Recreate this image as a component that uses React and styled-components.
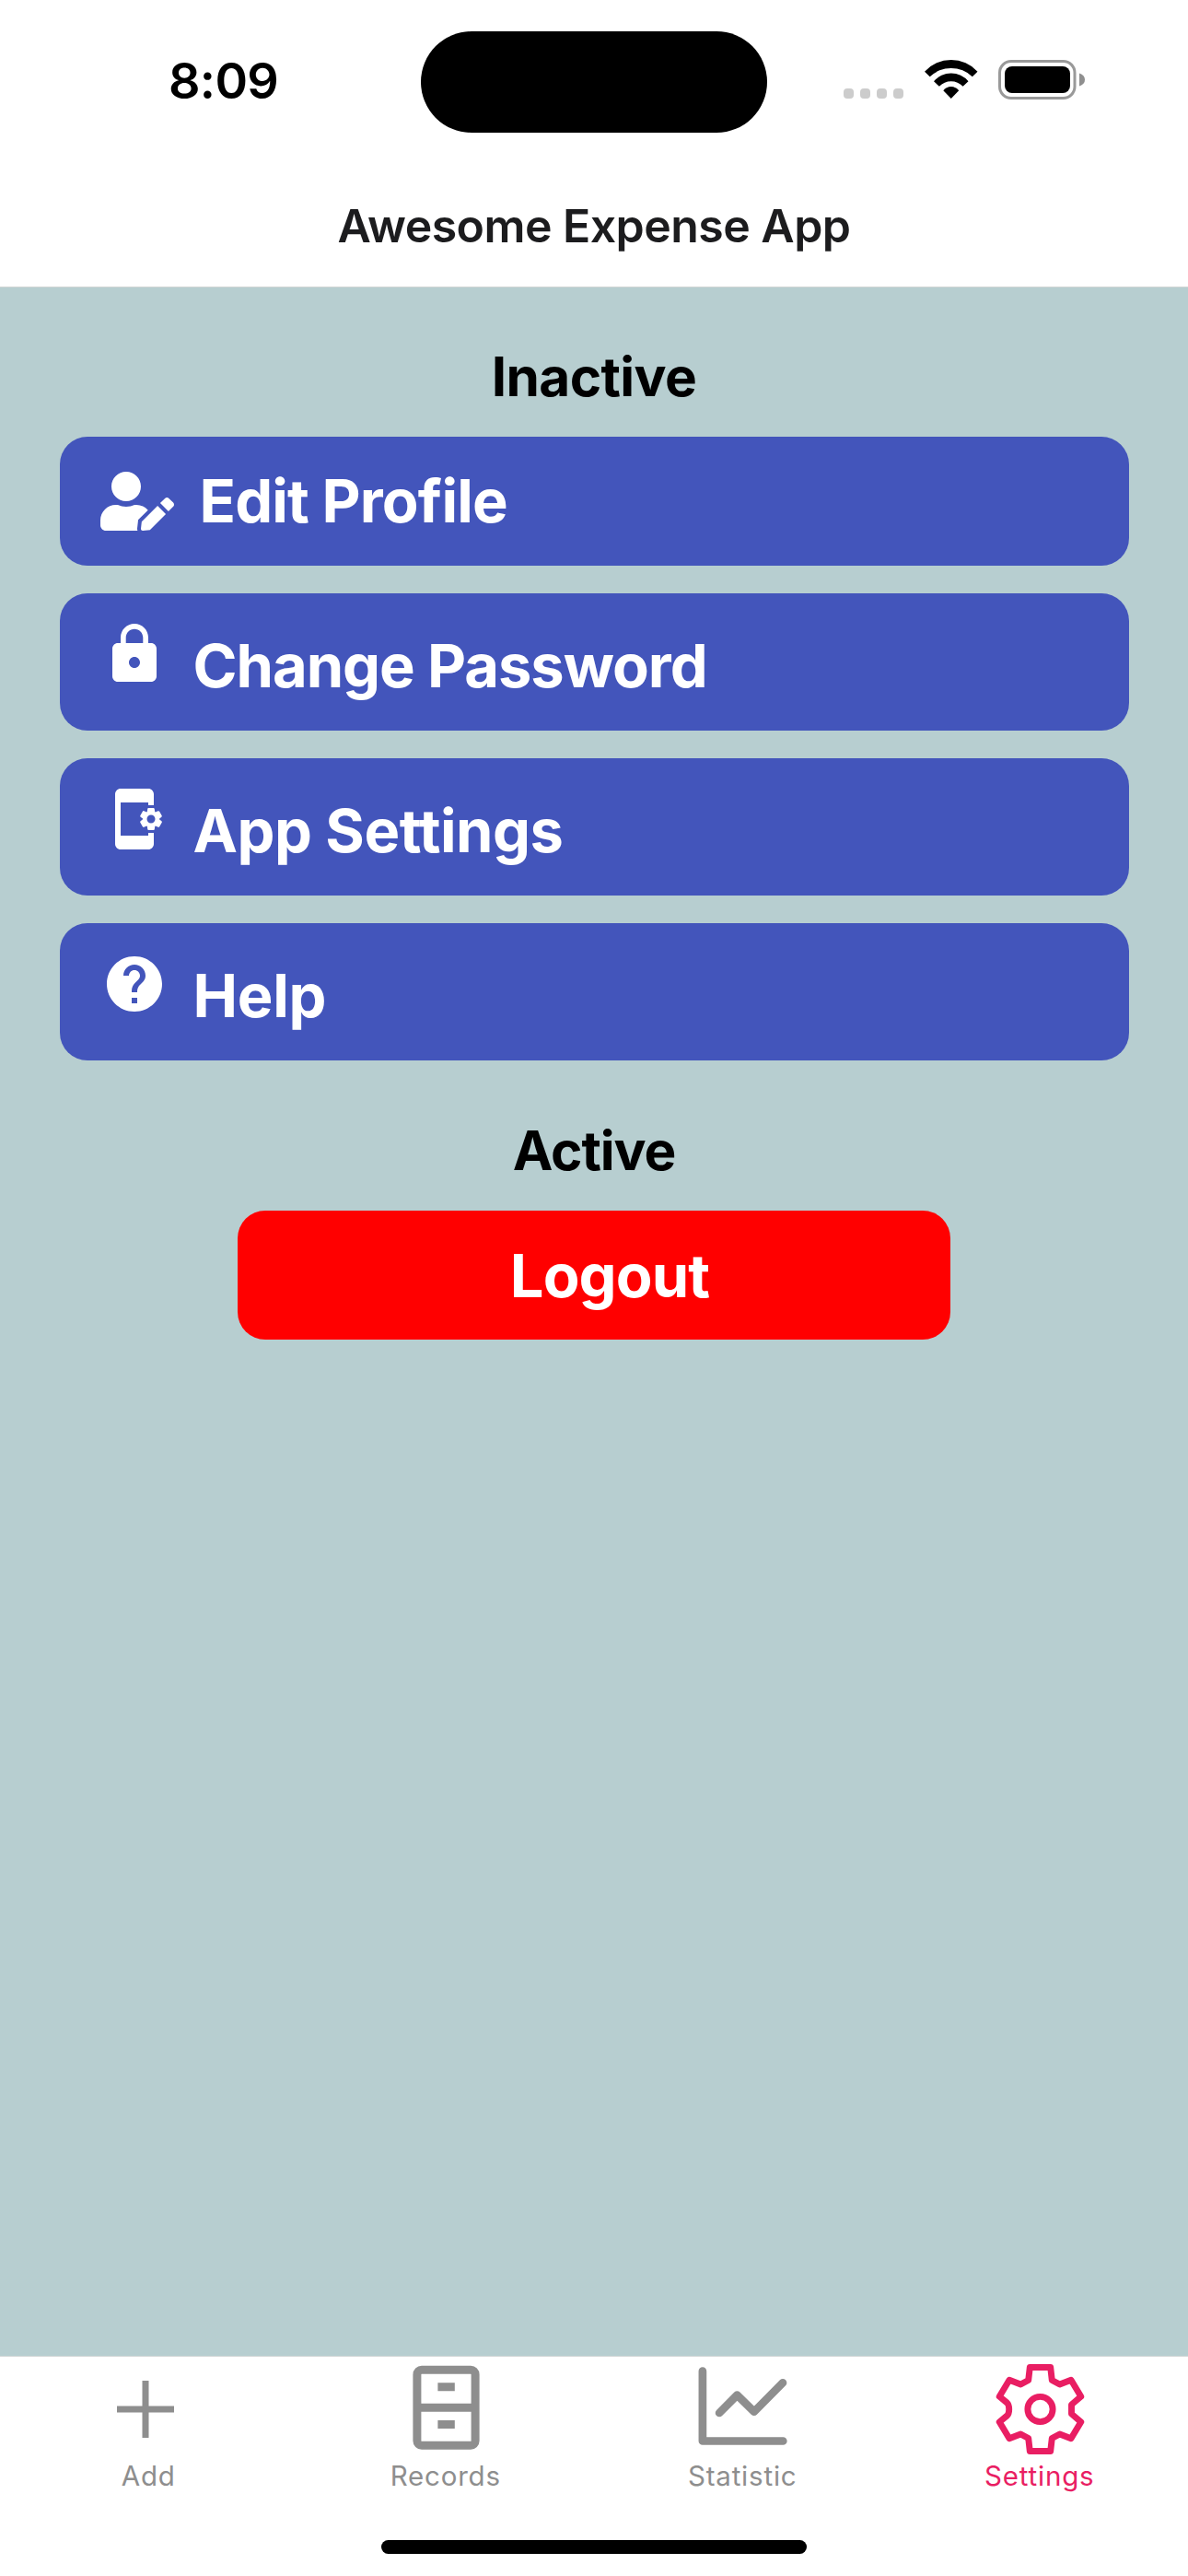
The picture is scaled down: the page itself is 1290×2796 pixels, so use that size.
import React from "react";
import styled, { createGlobalStyle } from "styled-components";
import { FaUserEdit } from "react-icons/fa";
import { MdLock, MdAppSettingsAlt, MdHelp } from "react-icons/md";

const GlobalStyle = createGlobalStyle`
  *, *::before, *::after { box-sizing: border-box; }
  body { margin: 0; background: #fff; }
`;

const Screen = styled.div`
  width: 1290px;
  height: 2796px;
  display: flex;
  flex-direction: column;
  background: #fff;
  font-family: Inter, "Liberation Sans", sans-serif;
  overflow: hidden;
`;

const StatusBar = styled.header`
  height: 177px;
  flex: none;
  display: grid;
  grid-template-columns: 457px 376px 1fr;
  align-items: start;
`;

const Clock = styled.div`
  padding: 55px 0 0 183px;
  font-size: 54px;
  line-height: 66px;
  font-weight: 600;
  letter-spacing: -0.7px;
  color: #000;
`;

const Island = styled.div`
  margin-top: 34px;
  height: 110px;
  border-radius: 55px;
  background: #000;
`;

const Indicators = styled.div`
  display: flex;
  align-items: flex-end;
  padding: 65px 0 0 83px;
`;

const Dots = styled.div`
  display: flex;
  gap: 7px;
  margin-bottom: 1px;
`;

const Dot = styled.i`
  width: 11px;
  height: 11px;
  border-radius: 4px;
  background: #ccc;
`;

const WifiSvg = styled.svg`
  width: 58px;
  height: 42px;
  margin: 0 22px 1px 23px;
`;

const BatterySvg = styled.svg`
  width: 95px;
  height: 43px;
`;

const TitleBar = styled.div`
  height: 135px;
  flex: none;
  padding-top: 37px;
  border-bottom: 1px solid #d2d6d6;
  text-align: center;
`;

const Title = styled.h1`
  margin: 0;
  font-size: 50px;
  line-height: 62px;
  font-weight: 600;
  letter-spacing: -0.55px;
  color: #1c1c1e;
`;

const Content = styled.main`
  flex: 1;
  display: flex;
  flex-direction: column;
  align-items: center;
  background: #b7ced0;
`;

const Heading = styled.h2`
  margin: 0;
  padding-top: ${(p) => p.$top}px;
  height: ${(p) => p.$height}px;
  font-size: 58.5px;
  line-height: 72px;
  font-weight: 700;
  letter-spacing: ${(p) => p.$spacing}px;
  color: #000;
`;

const Menu = styled.div`
  width: 1161px;
  display: flex;
  flex-direction: column;
  gap: 30px;
`;

const MenuButton = styled.button`
  height: ${(p) => (p.$tall ? 149 : 140)}px;
  display: flex;
  align-items: flex-start;
  padding: ${(p) => (p.$tall ? "30px 0 0 45px" : "38px 0 0 44px")};
  border: 0;
  border-radius: 30px;
  background: #4355bb;
  color: #fff;
  font-family: inherit;
  text-align: left;
`;

const MenuIcon = styled.span`
  flex: none;
  display: block;
  width: ${(p) => (p.$wide ? 80 : 72)}px;
  height: ${(p) => (p.$wide ? 64 : 72)}px;

  svg {
    display: block;
    width: 100%;
    height: 100%;
  }
`;

const MenuLabel = styled.span`
  margin-left: 28px;
  margin-top: ${(p) => (p.$tall ? 9 : -8)}px;
  font-size: 65px;
  line-height: 80px;
  font-weight: 700;
  letter-spacing: ${(p) => p.$spacing}px;
`;

const LogoutButton = styled.button`
  width: 774px;
  height: 140px;
  padding: 1px 0 0 34px;
  border: 0;
  border-radius: 30px;
  background: #ff0000;
  color: #fff;
  font-family: inherit;
  font-size: 65px;
  line-height: 80px;
  font-weight: 700;
  letter-spacing: -0.9px;
`;

const TabBar = styled.nav`
  height: 239px;
  flex: none;
  display: grid;
  grid-template-columns: repeat(4, 1fr);
  grid-template-rows: 199px 15px;
  border-top: 1px solid #d2d6d6;
`;

const Tab = styled.div`
  display: flex;
  flex-direction: column;
  align-items: center;
  color: ${(p) => (p.$active ? "#e91e63" : "#8e8e8e")};
`;

const TabIcon = styled.svg`
  width: 114px;
  height: 114px;
  flex: none;
  margin-left: ${(p) => p.$shift || 0}px;
  fill: none;
  stroke: currentColor;
`;

const TabLabel = styled.span`
  margin-top: -3px;
  font-size: 29.5px;
  line-height: 36px;
  font-weight: 400;
  letter-spacing: 0.8px;
`;

const HomeIndicator = styled.div`
  grid-column: 1 / -1;
  justify-self: center;
  width: 462px;
  height: 15px;
  border-radius: 8px;
  background: #000;
`;

const Wifi = () => (
  <WifiSvg viewBox="0 0 58 42">
    <path d="M0 12.700A39 39 0 0 1 57.500 12.700L51.800 18.300A33 33 0 0 0 5.700 18.300Z" />
    <path d="M10 23.300A24.500 24.500 0 0 1 47.500 23.300L41.600 28.700A18 18 0 0 0 15.900 28.700Z" />
    <path d="M20.300 33.300A10.500 10.500 0 0 1 37.200 33.300L28.750 42Z" />
  </WifiSvg>
);

const Battery = () => (
  <BatterySvg viewBox="0 0 95 43">
    <rect x="1.500" y="1.500" width="81.500" height="40" rx="12.500" fill="none" stroke="#999" strokeWidth="3" />
    <rect x="7" y="7" width="71" height="29" rx="8" />
    <path d="M88 14.500Q94 16.500 94 21.500T88 28.500Z" fill="#8f8f8f" />
  </BatterySvg>
);

const MENU = [
  { label: "Edit Profile", Icon: FaUserEdit, wide: true, spacing: -0.85 },
  { label: "Change Password", Icon: MdLock, spacing: -1.05 },
  { label: "App Settings", Icon: MdAppSettingsAlt, spacing: -0.5 },
  { label: "Help", Icon: MdHelp, spacing: -0.3 },
];

export default function App() {
  return (
    <Screen>
      <GlobalStyle />
      <StatusBar>
        <Clock>8:09</Clock>
        <Island />
        <Indicators>
          <Dots><Dot /><Dot /><Dot /><Dot /></Dots>
          <Wifi />
          <Battery />
        </Indicators>
      </StatusBar>
      <TitleBar><Title>Awesome Expense App</Title></TitleBar>
      <Content>
        <Heading $top={61} $height={162} $spacing={-0.6}>Inactive</Heading>
        <Menu>
          {MENU.map(({ label, Icon, wide, spacing }) => (
            <MenuButton key={label} $tall={!wide}>
              <MenuIcon $wide={wide}><Icon /></MenuIcon>
              <MenuLabel $tall={!wide} $spacing={spacing}>{label}</MenuLabel>
            </MenuButton>
          ))}
        </Menu>
        <Heading $top={62} $height={163} $spacing={-1.1}>Active</Heading>
        <LogoutButton>Logout</LogoutButton>
      </Content>
      <TabBar>
        <Tab>
          <TabIcon $shift={-6} viewBox="0 0 114 114" strokeWidth="7">
            <path d="M57 26v62M26 57h62" />
          </TabIcon>
          <TabLabel>Add</TabLabel>
        </Tab>
        <Tab>
          <TabIcon viewBox="0 0 114 114" strokeWidth="9">
            <rect x="25.900" y="14.200" width="63.200" height="82" rx="5" />
            <path d="M26 55.300h63M48.400 32.700h18.400M48.400 73.500h18.400" />
          </TabIcon>
          <TabLabel>Records</TabLabel>
        </Tab>
        <Tab>
          <TabIcon viewBox="0 0 114 114" strokeWidth="8.700" strokeLinecap="round" strokeLinejoin="round">
            <path d="M13.900 15.700V91.500H101.300M32.100 61L51.400 41.700L69.800 59.700L101 28.300" />
          </TabIcon>
          <TabLabel>Statistic</TabLabel>
        </Tab>
        <Tab $active>
          <TabIcon viewBox="0 0 114 114" strokeWidth="6.900" strokeLinejoin="round">
            <circle cx="57.500" cy="57" r="13.600" />
            <path d="M46.300 11.500H68.700L70.300 25.500L78.700 30L91 25.300L101.800 43.200L91.500 52V62L101.800 70.800L91 88.700L78.700 84L70.300 88.500L68.700 102.500H46.300L44.700 88.500L36.300 84L24 88.700L13.200 70.800L21.500 64Q23.700 62 23.700 57T21.500 50L13.200 43.200L24 25.300L36.300 30L44.700 25.500Z" />
          </TabIcon>
          <TabLabel>Settings</TabLabel>
        </Tab>
        <HomeIndicator />
      </TabBar>
    </Screen>
  );
}
